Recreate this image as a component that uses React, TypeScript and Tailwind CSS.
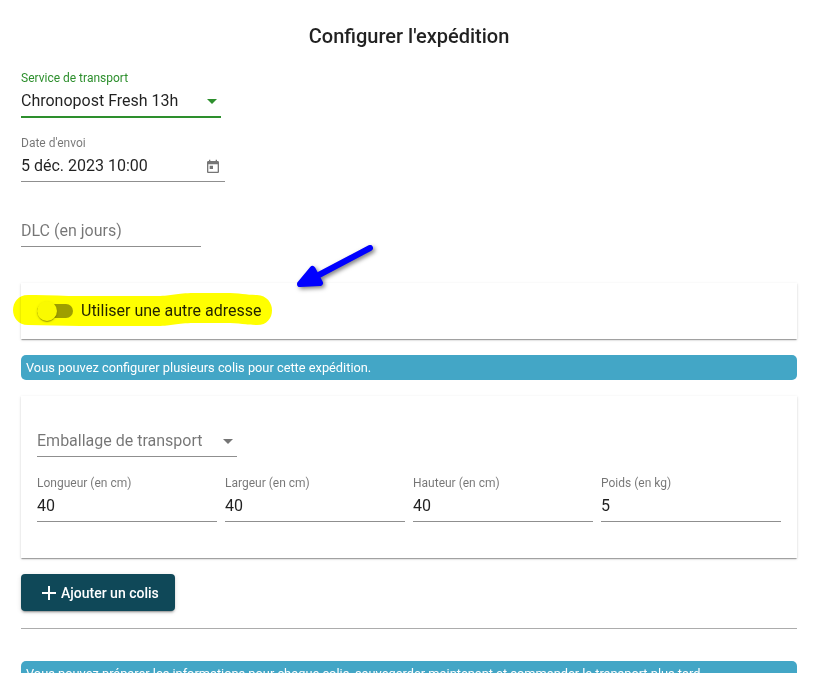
import type { ReactNode } from "react";

type FieldProps = {
  label?: string;
  value?: string;
  placeholder?: string;
  width: string;
  active?: boolean;
  icon?: ReactNode;
};

function Field({ label, value, placeholder, width, active, icon }: FieldProps) {
  return (
    <div className={`h-[65px] shrink-0 ${width}`}>
      <div
        className={`h-4 w-fit origin-top-left translate-y-[0.4px] scale-75 text-[16px] leading-[21px] whitespace-nowrap ${
          active ? "text-[#2d8f2d]" : "text-black/54"
        }`}
      >
        {label}
      </div>
      <div
        className={`mt-0.5 flex items-center justify-between pb-0.5 ${
          active ? "h-[30px] border-b-2 border-[#2d8f2d]" : "h-[29px] border-b border-[#8f8f8f]"
        }`}
      >
        <span className={`text-[16px] leading-6 ${value ? "text-black/87" : "text-black/54"}`}>
          {value ?? placeholder}
        </span>
        {icon}
      </div>
    </div>
  );
}

function Caret({ className }: { className: string }) {
  return (
    <svg className={`mr-1 h-[5px] w-[10px] ${className}`} viewBox="0 0 10 5" fill="currentColor">
      <path d="M0 0H10L5 5Z" />
    </svg>
  );
}

function CalendarIcon() {
  return (
    <svg className="mt-0.5 mr-1 h-4 w-4 text-black/54" viewBox="0 0 24 24" fill="currentColor">
      <path d="M19 3h-1V1h-2v2H8V1H6v2H5c-1.11 0-1.99.9-1.99 2L3 19c0 1.1.89 2 2 2h14c1.1 0 2-.9 2-2V5c0-1.1-.9-2-2-2zm0 16H5V8h14v11zM7 10h5v5H7z" />
    </svg>
  );
}

function Info({ children }: { children: ReactNode }) {
  return (
    <div className="h-[25px] shrink-0 rounded-[5px] bg-[#43a6c6] px-[5px] text-[12.8px] leading-[25px] text-white">
      {children}
    </div>
  );
}

const cardShadow =
  "shadow-[0_2px_1px_-1px_rgba(0,0,0,0.2),0_1px_1px_0_rgba(0,0,0,0.14),0_1px_3px_0_rgba(0,0,0,0.12)]";

export default function App() {
  return (
    <div className="relative flex h-[673px] w-[819px] flex-col overflow-hidden bg-white pr-[22px] pl-[21px] font-['Roboto',sans-serif]">
      <h1 className="mt-5 h-8 text-center text-[20px] leading-8 font-medium text-black/87">
        Configurer l'expédition
      </h1>

      <div className="mt-[18px] flex flex-col">
        <Field
          label="Service de transport"
          value="Chronopost Fresh 13h"
          width="w-[200px]"
          active
          icon={<Caret className="text-[#2d8f2d]" />}
        />
        <Field label="Date d'envoi" value="5 déc. 2023 10:00" width="w-[204px]" icon={<CalendarIcon />} />
        <Field placeholder="DLC (en jours)" width="w-[180px]" />
      </div>

      <section className={`mt-[18px] flex h-14 shrink-0 items-center bg-white px-4 ${cardShadow}`}>
        <span className="flex h-5 w-9 items-center">
          <span className="flex h-3.5 w-9 items-center rounded-full bg-black/38">
            <span className="h-5 w-5 shrink-0 rounded-full bg-[#fafafa] shadow-[0_2px_1px_-1px_rgba(0,0,0,0.2),0_1px_1px_0_rgba(0,0,0,0.14),0_1px_3px_0_rgba(0,0,0,0.12)]" />
          </span>
        </span>
        <span className="ml-2 text-[16px] leading-6 text-black/87">Utiliser une autre adresse</span>
      </section>

      <div className="mt-4 flex flex-col">
        <Info>Vous pouvez configurer plusieurs colis pour cette expédition.</Info>
      </div>

      <section className={`mt-4 h-[162px] shrink-0 bg-white px-4 pt-3.5 ${cardShadow}`}>
        <Field
          placeholder="Emballage de transport"
          width="w-[200px]"
          icon={<Caret className="text-black/54" />}
        />
        <div className="flex gap-2">
          <Field label="Longueur (en cm)" value="40" width="w-[180px]" />
          <Field label="Largeur (en cm)" value="40" width="w-[180px]" />
          <Field label="Hauteur (en cm)" value="40" width="w-[180px]" />
          <Field label="Poids (en kg)" value="5" width="w-[180px]" />
        </div>
      </section>

      <button className="mt-4 flex h-[37px] w-[154px] shrink-0 items-center rounded-[4px] bg-[#0f4858] pl-4 text-[14px] font-medium text-white shadow-[0_3px_1px_-2px_rgba(0,0,0,0.2),0_2px_2px_0_rgba(0,0,0,0.14),0_1px_5px_0_rgba(0,0,0,0.12)]">
        <svg className="h-6 w-6" viewBox="0 0 24 24" fill="currentColor">
          <path d="M19 13h-6v6h-2v-6H5v-2h6V5h2v6h6v2z" />
        </svg>
        <span className="pt-px">Ajouter un colis</span>
      </button>

      <hr className="mt-[17px] shrink-0 border-t border-[#acacac]" />

      <div className="mt-8 flex flex-col">
        <Info>
          Vous pouvez préparer les informations pour chaque colis, sauvegarder maintenant et commander le
          transport plus tard.
        </Info>
      </div>

      <svg
        className="pointer-events-none absolute top-[285px] left-0 h-[48px] w-[290px] mix-blend-multiply"
        viewBox="0 285 290 48"
        fill="#ffff00"
      >
        <path d="M28 295C45 294.5 62 296 80 296H158C172 296 176 293 194 293H225C240 293 247 295 257 295C277 296 277 325 257 325C247 325 240 323 225 323H194C176 323 172 326 158 326H80C62 326 45 325 28 325C8 325 8 295 28 295Z" />
      </svg>

      <svg
        className="pointer-events-none absolute top-[235px] left-[285px] h-[65px] w-[100px] drop-shadow-[2px_2px_2px_rgba(0,0,0,0.5)]"
        viewBox="285 235 100 65"
        fill="#0000ff"
        stroke="#0000ff"
        strokeLinejoin="round"
        strokeLinecap="round"
      >
        <path d="M370 248L315 277" strokeWidth="6" fill="none" />
        <path d="M300 284L312.500 269L320 283Z" strokeWidth="6" />
      </svg>
    </div>
  );
}
